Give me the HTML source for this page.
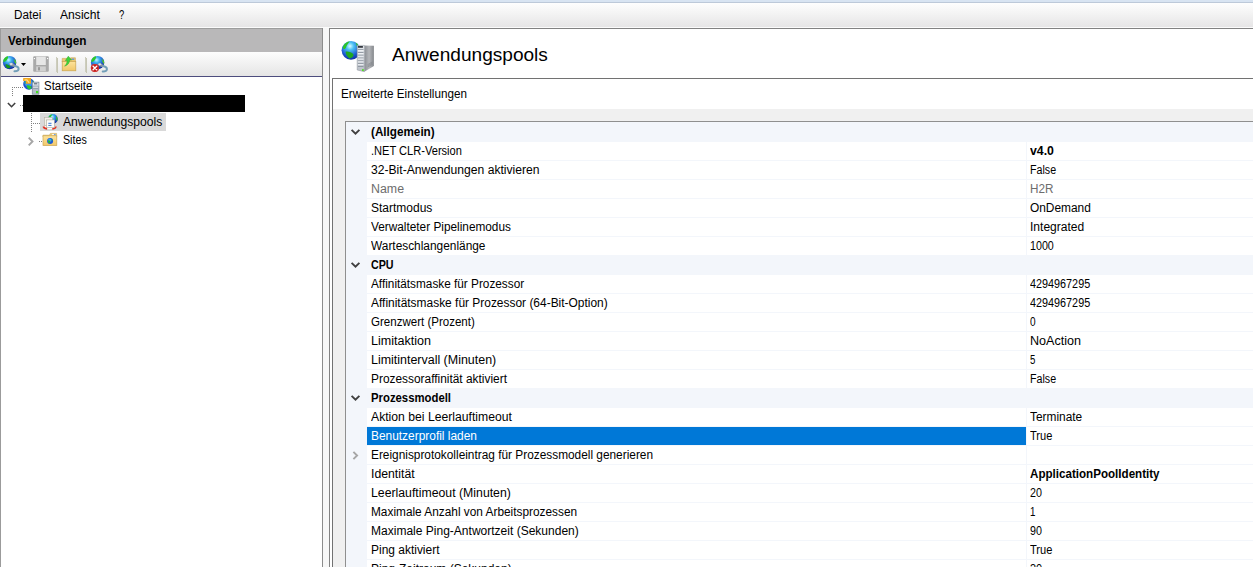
<!DOCTYPE html>
<html><head><meta charset="utf-8"><title>IIS</title>
<style>
html,body{margin:0;padding:0;}
body{width:1253px;height:567px;overflow:hidden;position:relative;background:#f0f0f0;font-family:"Liberation Sans",sans-serif;font-size:12px;color:#000;}
.abs{position:absolute;}
#topstrip{left:0;top:0;width:1253px;height:2px;background:#d8e4f2;}
#topstrip2{left:0;top:2px;width:1253px;height:1px;background:#bdc9d9;}
#menubar{left:0;top:3px;width:1253px;height:24px;background:linear-gradient(#fefefe 0%,#f3f3f3 45%,#e6e5e6 100%);}
#menuline{left:0;top:27px;width:1253px;height:1px;background:#fbfbfb;}
.mi{position:absolute;transform-origin:0 0;top:6px;font-size:12px;line-height:13px;white-space:nowrap;}
#left{left:0;top:28px;width:323px;height:539px;background:#fff;}
#lbl{left:0;top:28px;width:1px;height:539px;background:#9b9b9b;}
#lbr{left:322px;top:28px;width:1px;height:539px;background:#8c8c8c;}
#lhead{left:1px;top:28px;width:321px;height:24px;background:#b9b8b9;border-top:1px solid #9d9d9d;box-sizing:border-box;}
#lhead span{position:absolute;transform-origin:0 0;left:7px;top:6px;font-weight:bold;font-size:12px;line-height:13px;}
#ltool{left:1px;top:52px;width:321px;height:24px;background:linear-gradient(#fdfdfd,#e5e5e5);}
#lline{left:1px;top:76px;width:321px;height:1px;background:#4d4d7e;}
.t{position:absolute;transform-origin:0 0;white-space:nowrap;font-size:12px;line-height:13px;}
#gap{left:323px;top:28px;width:6px;height:539px;background:#f7f7f7;}
#right{left:329px;top:28px;width:930px;height:545px;background:#fff;border:1px solid #828282;box-sizing:border-box;}
#inner{left:332px;top:78px;width:930px;height:495px;background:#f0f0f0;border:1px solid #727272;box-sizing:border-box;}
#innerhead{left:333px;top:79px;width:920px;height:30px;background:#fff;}
#grid{left:345px;top:121px;width:920px;height:460px;background:#f3f6fb;border:1px solid #8f8f8f;box-sizing:border-box;}
.row{position:absolute;left:346px;width:907px;height:19px;}
.row .g{position:absolute;left:0;top:0;width:21px;height:19px;background:#f3f6fb;}
.row .n{position:absolute;left:21px;top:0;width:659px;height:18px;background:#fff;border-bottom:1px solid #f3f6fb;}
.row .v{position:absolute;left:681px;top:0;width:226px;height:18px;background:#fff;border-bottom:1px solid #f3f6fb;}
.row .n:after{content:"";position:absolute;left:659px;top:0;width:1px;height:19px;background:#f3f6fb;}
.row .n span,.row .v span{position:absolute;transform-origin:0 0;left:4px;top:3px;font-size:12px;line-height:13px;white-space:nowrap;}
.row .v span{left:3px;}
.cat{position:absolute;left:346px;width:907px;height:19px;background:#f3f6fb;}
.cat span{position:absolute;transform-origin:0 0;left:25px;top:3px;font-weight:bold;font-size:12px;line-height:13px;white-space:nowrap;}
.sel .n{background:#0078d7;color:#fff;}
.dis{color:#6d6d6d;}
.b{font-weight:bold;}
.dot{position:absolute;background-image:linear-gradient(#808080,#808080);}
.hd{height:1px;background:repeating-linear-gradient(90deg,#808080 0,#808080 1px,transparent 1px,transparent 2px);}
.vd{width:1px;background:repeating-linear-gradient(180deg,#808080 0,#808080 1px,transparent 1px,transparent 2px);}
</style></head><body>
<div class="abs" id="topstrip"></div>
<div class="abs" id="topstrip2"></div>
<div class="abs" id="menubar">
<span class="mi" style="left:14px;transform:scaleX(0.9722);">Datei</span>
<span class="mi" style="left:60px;transform:scaleX(1.0117);">Ansicht</span>
<span class="mi" style="left:119px;transform:scaleX(0.7856);">?</span>
</div>
<div class="abs" id="menuline"></div>
<div class="abs" id="left"></div>
<div class="abs" id="lhead"><span style="transform:scaleX(0.9793);">Verbindungen</span></div>
<div class="abs" id="ltool"></div>
<div class="abs" id="lline"></div>
<div class="abs" id="lbl"></div>
<div class="abs" id="lbr"></div>
<div class="abs" id="gap"></div>
<svg class="abs" style="left:2px;top:55px" width="18" height="18" viewBox="0 0 18 18">
<defs>
<radialGradient id="gl1" cx="0.42" cy="0.3" r="0.78"><stop offset="0" stop-color="#c4f8ff"/><stop offset="0.28" stop-color="#3cb0f0"/><stop offset="0.68" stop-color="#1c4cc4"/><stop offset="1" stop-color="#0a2288"/></radialGradient>
<linearGradient id="fo1" x1="0" y1="0" x2="0" y2="1"><stop offset="0" stop-color="#fde39c"/><stop offset="1" stop-color="#f1c768"/></linearGradient>
</defs>
<circle cx="7.6" cy="7.6" r="6.7" fill="url(#gl1)"/>
<path d="M1.3 6 C1.6 3.6 3.4 1.7 5.8 1.2 C6.6 2 6 3.2 5.2 4.2 C4.8 5.6 3.4 6.6 1.5 7Z" fill="#2ec828"/>
<path d="M12.3 4 C13.7 4.9 14.3 6.8 14.1 9 C12.8 8.4 11.9 6.4 12.3 4Z" fill="#52cc20"/>
<path d="M3.5 9.4 C5 8.9 7 10 8.6 11.6 C8.5 12.9 7 13.6 5.5 13.3 C4.3 12.4 3.5 11 3.5 9.4Z" fill="#14961c"/>
<path d="M6.8 8.6 L9.6 7.6 L13.3 10 L12 12 L8.4 10.8Z" fill="#8c96a0"/>
<path d="M7.2 8.7 L9.4 7.9 L11 9 L9 10.2Z" fill="#e4e8ec"/>
<path d="M12.6 10.8 C15.2 11.4 16.9 12.8 16.6 14.3 C16.3 15.8 14.4 16.4 12.4 16.3" fill="none" stroke="#729eb8" stroke-width="1.9" stroke-linecap="round"/>
</svg>
<svg class="abs" style="left:21px;top:63px" width="5" height="3" viewBox="0 0 5 3"><path d="M0 0 H5 L2.5 3Z" fill="#000"/></svg>
<svg class="abs" style="left:33px;top:56px" width="16" height="16" viewBox="0 0 16 16">
<rect x="0.2" y="0.2" width="15.6" height="15.6" rx="1" fill="#a9a9a9"/>
<rect x="3.2" y="0.6" width="9.6" height="8.4" fill="#e6e6e6"/>
<rect x="3.2" y="10.4" width="9.6" height="4.8" fill="#d0d0d0"/>
<rect x="5" y="11.2" width="2" height="3.2" fill="#9a9a9a"/>
<rect x="0.9" y="2" width="1.1" height="1.1" fill="#fff"/>
<rect x="14" y="2" width="1.1" height="1.1" fill="#fff"/>
</svg>
<div class="abs" style="left:56px;top:57px;width:1px;height:15px;background:#cdcdbe"></div><div class="abs" style="left:57px;top:58px;width:1px;height:15px;background:#c6c6b4"></div>
<svg class="abs" style="left:61px;top:55px" width="16" height="17" viewBox="0 0 16 17">
<path d="M1.2 3.4 H9 L9.8 2.8 H14.4 V6.8 H1.2Z" fill="#eec770" stroke="#c9a550" stroke-width="0.6"/>
<rect x="10.6" y="3.6" width="2.6" height="1.2" fill="#4a8fe8"/>
<rect x="1.2" y="6.6" width="13.6" height="9.2" fill="url(#fo1)" stroke="#c9a550" stroke-width="0.7"/>
<path d="M7.3 1.2 L10.6 5 L8.6 5 C8.6 8 6.6 10.4 3.6 11.2 C5.6 9.2 6.2 7.2 6 5.4 L4.4 5.6Z" fill="#3fd33a" stroke="#2faa2c" stroke-width="0.5"/>
</svg>
<div class="abs" style="left:85px;top:57px;width:1px;height:15px;background:#cdcdbe"></div><div class="abs" style="left:86px;top:58px;width:1px;height:15px;background:#c6c6b4"></div>
<svg class="abs" style="left:90px;top:55px" width="18" height="18" viewBox="0 0 18 18">
<circle cx="7.6" cy="7.6" r="6.7" fill="url(#gl1)"/>
<path d="M1.3 6 C1.6 3.6 3.4 1.7 5.8 1.2 C6.6 2 6 3.2 5.2 4.2 C4.8 5.6 3.4 6.6 1.5 7Z" fill="#2ec828"/>
<path d="M12.3 4 C13.7 4.9 14.3 6.8 14.1 9 C12.8 8.4 11.9 6.4 12.3 4Z" fill="#52cc20"/>
<path d="M7.4 8.9 L10.2 7.9 L13.9 10.3 L12.6 12.3 L9 11.1Z" fill="#8c96a0"/>
<path d="M7.8 9 L10 8.2 L11.6 9.3 L9.6 10.5Z" fill="#e4e8ec"/>
<path d="M13.2 11 C15.6 11.6 17.2 13 16.9 14.5 C16.6 16 14.7 16.6 12.7 16.5" fill="none" stroke="#729eb8" stroke-width="1.9" stroke-linecap="round"/>
<circle cx="4.9" cy="13" r="4.05" fill="#c41c1c"/>
<circle cx="4.9" cy="13" r="3.7" fill="none" stroke="#d83a38" stroke-width="0.6"/>
<path d="M3.1 11.3 L6.7 14.7 M6.7 11.3 L3.1 14.7" stroke="#fff" stroke-width="1.4" stroke-linecap="round"/>
<circle cx="4.9" cy="13" r="0.9" fill="#fff"/>
</svg>
<div class="abs hd" style="left:12px;top:87px;width:11px"></div>
<div class="abs vd" style="left:12px;top:87px;height:9px"></div>
<svg class="abs" style="left:22px;top:77px" width="18" height="18" viewBox="0 0 18 18">
<circle cx="6.9" cy="7" r="5.7" fill="#1c50d4"/>
<circle cx="6.6" cy="6" r="3.8" fill="#3a94ea"/>
<path d="M2.2 4.2 L3.8 4 L4 6.6 L2.6 7.4Z" fill="#22a0a0"/>
<path d="M4.6 8.6 C6 7.8 8.4 8.6 9.6 10 C9.8 11.4 8.4 12.4 6.8 12.4 C5.4 11.6 4.4 10 4.6 8.6Z" fill="#22c832"/>
<path d="M10.6 3 L12 4.4 L11 5.2Z" fill="#40c838"/>
<path d="M1.1 1.6 Q1.1 1 1.8 1 H9 V6.7 H3.9 V3.9 H1.1Z" fill="#f2a81e"/>
<path d="M2.6 2.3 H5.2 L7.8 5.5 L6.6 5.9 L4.6 3.5 H2.6Z" fill="#fbd98a"/>
<rect x="10.3" y="5.2" width="6.6" height="12" fill="#b4bec8" stroke="#7f8c9c" stroke-width="0.8"/>
<rect x="10.9" y="5.8" width="5.4" height="3.2" fill="#e8edf2"/>
<rect x="11.9" y="6.4" width="3.4" height="0.9" fill="#2c3c50"/>
<rect x="11.1" y="8.6" width="5" height="0.7" fill="#8894a2"/>
<rect x="11.1" y="9.8" width="5" height="0.8" fill="#e4e8ee"/>
<rect x="11.1" y="11" width="5" height="0.7" fill="#8894a2"/>
<rect x="14" y="14" width="2.2" height="2.2" fill="#44e020"/>
</svg>
<span class="t" style="left:44px;top:80px;transform:scaleX(0.9539);">Startseite</span>
<svg class="abs" style="left:7px;top:101px" width="10" height="8" viewBox="0 0 10 8"><path d="M0.9 2 L4.55 5.7 L8.2 2" fill="none" stroke="#404040" stroke-width="1.6"/></svg>
<div class="abs hd" style="left:20px;top:105px;width:3px"></div>
<div class="abs" style="left:23px;top:95px;width:222px;height:17px;background:#000"></div>
<div class="abs vd" style="left:31px;top:113px;height:19px"></div>
<div class="abs hd" style="left:31px;top:123px;width:11px"></div>
<div class="abs" style="left:40px;top:113px;width:126px;height:18px;background:#d9d9d9"></div>
<svg class="abs" style="left:42px;top:113px" width="17" height="18" viewBox="0 0 17 18">
<circle cx="10.9" cy="5.9" r="4.9" fill="url(#gl1)"/>
<path d="M6.4 4.2 C7.4 2.2 9 1.2 10.6 1.2 C9.8 2.4 8.8 3.4 8.2 4.8Z" fill="#2fc62a"/>
<path d="M14.2 3 C15.6 4.4 15.8 6.6 15.2 8.2 C14.2 7 13.8 5 14.2 3Z" fill="#36c428"/>
<ellipse cx="7.7" cy="14.3" rx="7.1" ry="2.5" fill="#fdfdfd" stroke="#b8b8b8" stroke-width="0.6"/>
<path d="M0.7 13.6 C0.7 15.4 2.6 16.5 5 16.8 L5.2 14.9 C3.8 14.7 2.9 14.2 2.7 13.5Z" fill="#e23424"/>
<path d="M14.7 13.6 C14.7 15.4 12.8 16.5 10.4 16.8 L10.2 14.9 C11.6 14.7 12.5 14.2 12.7 13.5Z" fill="#e23424"/>
<rect x="2.5" y="4.4" width="7.8" height="8.2" fill="#f4f2ea" stroke="#b4b0a4" stroke-width="0.6"/>
<rect x="4.6" y="6.9" width="7.8" height="7.8" fill="#fdfdfb" stroke="#aca89c" stroke-width="0.6"/>
<rect x="6.3" y="9.8" width="3.2" height="1" fill="#3a78d0"/>
<rect x="6.3" y="11.9" width="3.2" height="1" fill="#3a78d0"/>
</svg>
<span class="t" style="left:63px;top:116px;transform:scaleX(1.0128);">Anwendungspools</span>
<svg class="abs" style="left:27px;top:136px" width="8" height="11" viewBox="0 0 8 11"><path d="M1.7 1.7 L5.5 5.5 L1.7 9.3" fill="none" stroke="#a6a6a6" stroke-width="1.9"/></svg>
<div class="abs hd" style="left:39px;top:141px;width:3px"></div>
<svg class="abs" style="left:42px;top:132px" width="16" height="15" viewBox="0 0 16 15">
<path d="M1 3.2 H7.4 L8.4 1.4 H14.6 V5 H1Z" fill="#eecb78" stroke="#caa654" stroke-width="0.6"/>
<rect x="10" y="2.2" width="3.4" height="1" fill="#fff"/>
<rect x="12" y="2.2" width="1.6" height="1" fill="#4a8fe8"/>
<rect x="1" y="3.8" width="13.8" height="9.8" fill="url(#fo1)" stroke="#caa654" stroke-width="0.7"/>
<circle cx="8.1" cy="8.9" r="3" fill="#1c58d8"/>
<circle cx="7.7" cy="8.3" r="1.7" fill="#3aa0ee"/>
<path d="M6 8.6 C6.6 8 7.6 8.4 8.2 9.2 C8.4 10.2 7.8 11 7 11.4 C6.2 10.8 5.8 9.6 6 8.6Z" fill="#26c030"/>
<path d="M9.4 6.6 L10.6 7.8 L10 9.2 Z" fill="#26c030"/>
</svg>
<span class="t" style="left:63px;top:134px;transform:scaleX(0.8901);">Sites</span>

<div class="abs" id="right"></div>
<svg class="abs" style="left:340px;top:39px" width="36" height="34" viewBox="0 0 36 34">
<defs>
<radialGradient id="gl2" cx="0.45" cy="0.28" r="0.8"><stop offset="0" stop-color="#d8fbff"/><stop offset="0.25" stop-color="#4cc0f4"/><stop offset="0.65" stop-color="#1c58d0"/><stop offset="1" stop-color="#0a2490"/></radialGradient>
<linearGradient id="sv1" x1="0" y1="0" x2="1" y2="0"><stop offset="0" stop-color="#8a8e94"/><stop offset="0.5" stop-color="#b4b6ba"/><stop offset="1" stop-color="#85888c"/></linearGradient>
<linearGradient id="sv2" x1="0" y1="0" x2="0" y2="1"><stop offset="0" stop-color="#e8ecf0"/><stop offset="1" stop-color="#b8bec6"/></linearGradient>
</defs>
<circle cx="11" cy="11.3" r="9.4" fill="url(#gl2)"/>
<path d="M3 7.4 C4.6 4 7.4 2.4 10 2.2 C8.6 4 6.8 5.6 6.2 8 C5.6 10 4.6 10.4 3.4 9.8 C2.8 9 2.8 8.2 3 7.4Z" fill="#2cc428"/>
<path d="M5.6 12.8 C8 12 11.4 13.4 13.4 15.2 C14 17 12.4 18.8 9.6 19.4 C7.4 18.4 5.8 15.8 5.6 12.8Z" fill="#1fa822"/>
<path d="M15.6 3.6 C17 4.4 18 5.8 18.4 7 L17 7.2Z" fill="#36c428"/>
<path d="M24.3 6.4 L33.9 6.8 L33.9 27 L24.3 32.7Z" fill="url(#sv1)"/>
<path d="M17.2 6.4 H24.3 V32.7 L17.2 31Z" fill="url(#sv2)" stroke="#8a9098" stroke-width="0.5"/>
<rect x="17.9" y="7.1" width="5" height="1.6" fill="#20242c"/>
<g fill="#8c949e"><rect x="17.9" y="10.2" width="5.6" height="0.9"/><rect x="17.9" y="13" width="5.6" height="0.9"/><rect x="17.9" y="15.8" width="5.6" height="0.9"/><rect x="17.9" y="18.6" width="5.6" height="0.9"/><rect x="17.9" y="21.4" width="5.6" height="0.9"/><rect x="17.9" y="24.2" width="5.6" height="0.9"/><rect x="17.9" y="27" width="5.6" height="0.9"/></g>
<g fill="#f4f6f8"><rect x="17.9" y="11.2" width="5.6" height="0.8"/><rect x="17.9" y="14" width="5.6" height="0.8"/><rect x="17.9" y="16.8" width="5.6" height="0.8"/><rect x="17.9" y="19.6" width="5.6" height="0.8"/><rect x="17.9" y="22.4" width="5.6" height="0.8"/><rect x="17.9" y="25.2" width="5.6" height="0.8"/></g>
<rect x="22" y="30.2" width="1.8" height="1.8" fill="#50e020"/>
<path d="M27.6 25.6 L32.6 22.8 M27.6 26.8 L32.6 24 M27.6 28 L32.6 25.2" stroke="#787c82" stroke-width="0.5"/>
</svg>
<span class="t" style="left:392px;top:44px;font-size:18px;line-height:22px;transform:scaleX(1.0595);">Anwendungspools</span>
<div class="abs" id="inner"></div>
<div class="abs" id="innerhead"></div>
<span class="t" style="left:341px;top:88px;transform:scaleX(0.9729);">Erweiterte Einstellungen</span>
<div class="abs" id="grid"></div>
<div class="cat" style="top:123px"><span style="transform:scaleX(0.9743);">(Allgemein)</span></div>
<svg class="abs" style="left:350px;top:128px" width="11" height="8" viewBox="0 0 11 8"><path d="M1.6 1.8 L5.5 5.7 L9.4 1.8" fill="none" stroke="#404040" stroke-width="1.9"/></svg>
<div class="row" style="top:142px"><div class="g"></div><div class="n"><span style="transform:scaleX(0.9231);">.NET CLR-Version</span></div><div class="v"><span class="b" style="transform:scaleX(1.0245);">v4.0</span></div></div>
<div class="row" style="top:161px"><div class="g"></div><div class="n"><span style="transform:scaleX(1.0109);">32-Bit-Anwendungen aktivieren</span></div><div class="v"><span style="transform:scaleX(0.8898);">False</span></div></div>
<div class="row" style="top:180px"><div class="g"></div><div class="n"><span class="dis" style="transform:scaleX(1.0319);">Name</span></div><div class="v"><span class="dis" style="transform:scaleX(0.9762);">H2R</span></div></div>
<div class="row" style="top:199px"><div class="g"></div><div class="n"><span>Startmodus</span></div><div class="v"><span style="transform:scaleX(0.9917);">OnDemand</span></div></div>
<div class="row" style="top:218px"><div class="g"></div><div class="n"><span style="transform:scaleX(0.9848);">Verwalteter Pipelinemodus</span></div><div class="v"><span style="transform:scaleX(1.0032);">Integrated</span></div></div>
<div class="row" style="top:237px"><div class="g"></div><div class="n"><span style="transform:scaleX(0.9899);">Warteschlangenlänge</span></div><div class="v"><span style="transform:scaleX(0.8916);">1000</span></div></div>
<div class="cat" style="top:256px"><span style="transform:scaleX(0.8922);">CPU</span></div>
<svg class="abs" style="left:350px;top:261px" width="11" height="8" viewBox="0 0 11 8"><path d="M1.6 1.8 L5.5 5.7 L9.4 1.8" fill="none" stroke="#404040" stroke-width="1.9"/></svg>
<div class="row" style="top:275px"><div class="g"></div><div class="n"><span style="transform:scaleX(0.9827);">Affinitätsmaske für Prozessor</span></div><div class="v"><span style="transform:scaleX(0.9014);">4294967295</span></div></div>
<div class="row" style="top:294px"><div class="g"></div><div class="n"><span style="transform:scaleX(0.9951);">Affinitätsmaske für Prozessor (64-Bit-Option)</span></div><div class="v"><span style="transform:scaleX(0.9014);">4294967295</span></div></div>
<div class="row" style="top:313px"><div class="g"></div><div class="n"><span style="transform:scaleX(0.9607);">Grenzwert (Prozent)</span></div><div class="v"><span style="transform:scaleX(0.8401);">0</span></div></div>
<div class="row" style="top:332px"><div class="g"></div><div class="n"><span style="transform:scaleX(1.0463);">Limitaktion</span></div><div class="v"><span style="transform:scaleX(1.0474);">NoAction</span></div></div>
<div class="row" style="top:351px"><div class="g"></div><div class="n"><span style="transform:scaleX(1.0372);">Limitintervall (Minuten)</span></div><div class="v"><span style="transform:scaleX(0.8037);">5</span></div></div>
<div class="row" style="top:370px"><div class="g"></div><div class="n"><span style="transform:scaleX(0.9910);">Prozessoraffinität aktiviert</span></div><div class="v"><span style="transform:scaleX(0.8898);">False</span></div></div>
<div class="cat" style="top:389px"><span style="transform:scaleX(0.9444);">Prozessmodell</span></div>
<svg class="abs" style="left:350px;top:394px" width="11" height="8" viewBox="0 0 11 8"><path d="M1.6 1.8 L5.5 5.7 L9.4 1.8" fill="none" stroke="#404040" stroke-width="1.9"/></svg>
<div class="row" style="top:408px"><div class="g"></div><div class="n"><span style="transform:scaleX(1.0158);">Aktion bei Leerlauftimeout</span></div><div class="v"><span style="transform:scaleX(0.9902);">Terminate</span></div></div>
<div class="row sel" style="top:427px"><div class="g"></div><div class="n"><span style="transform:scaleX(0.9924);">Benutzerprofil laden</span></div><div class="v"><span style="transform:scaleX(0.9233);">True</span></div></div>
<div class="row" style="top:446px"><div class="g"></div><div class="n"><span style="transform:scaleX(0.9879);">Ereignisprotokolleintrag für Prozessmodell generieren</span></div><div class="v"></div></div>
<svg class="abs" style="left:352px;top:450px" width="8" height="11" viewBox="0 0 8 11"><path d="M1.4 1.8 L5.1 5.5 L1.4 9.2" fill="none" stroke="#a6a6a6" stroke-width="1.9"/></svg>
<div class="row" style="top:465px"><div class="g"></div><div class="n"><span style="transform:scaleX(1.0216);">Identität</span></div><div class="v"><span class="b" style="transform:scaleX(0.9670);">ApplicationPoolIdentity</span></div></div>
<div class="row" style="top:484px"><div class="g"></div><div class="n"><span style="transform:scaleX(1.0228);">Leerlauftimeout (Minuten)</span></div><div class="v"><span style="transform:scaleX(0.8932);">20</span></div></div>
<div class="row" style="top:503px"><div class="g"></div><div class="n"><span style="transform:scaleX(0.9873);">Maximale Anzahl von Arbeitsprozessen</span></div><div class="v"><span style="transform:scaleX(0.8138);">1</span></div></div>
<div class="row" style="top:522px"><div class="g"></div><div class="n"><span style="transform:scaleX(1.0018);">Maximale Ping-Antwortzeit (Sekunden)</span></div><div class="v"><span style="transform:scaleX(0.8930);">90</span></div></div>
<div class="row" style="top:541px"><div class="g"></div><div class="n"><span style="transform:scaleX(0.9970);">Ping aktiviert</span></div><div class="v"><span style="transform:scaleX(0.9233);">True</span></div></div>
<div class="row" style="top:560px"><div class="g"></div><div class="n"><span style="transform:scaleX(0.9994);">Ping-Zeitraum (Sekunden)</span></div><div class="v"><span style="transform:scaleX(0.9163);">30</span></div></div>
</body></html>
